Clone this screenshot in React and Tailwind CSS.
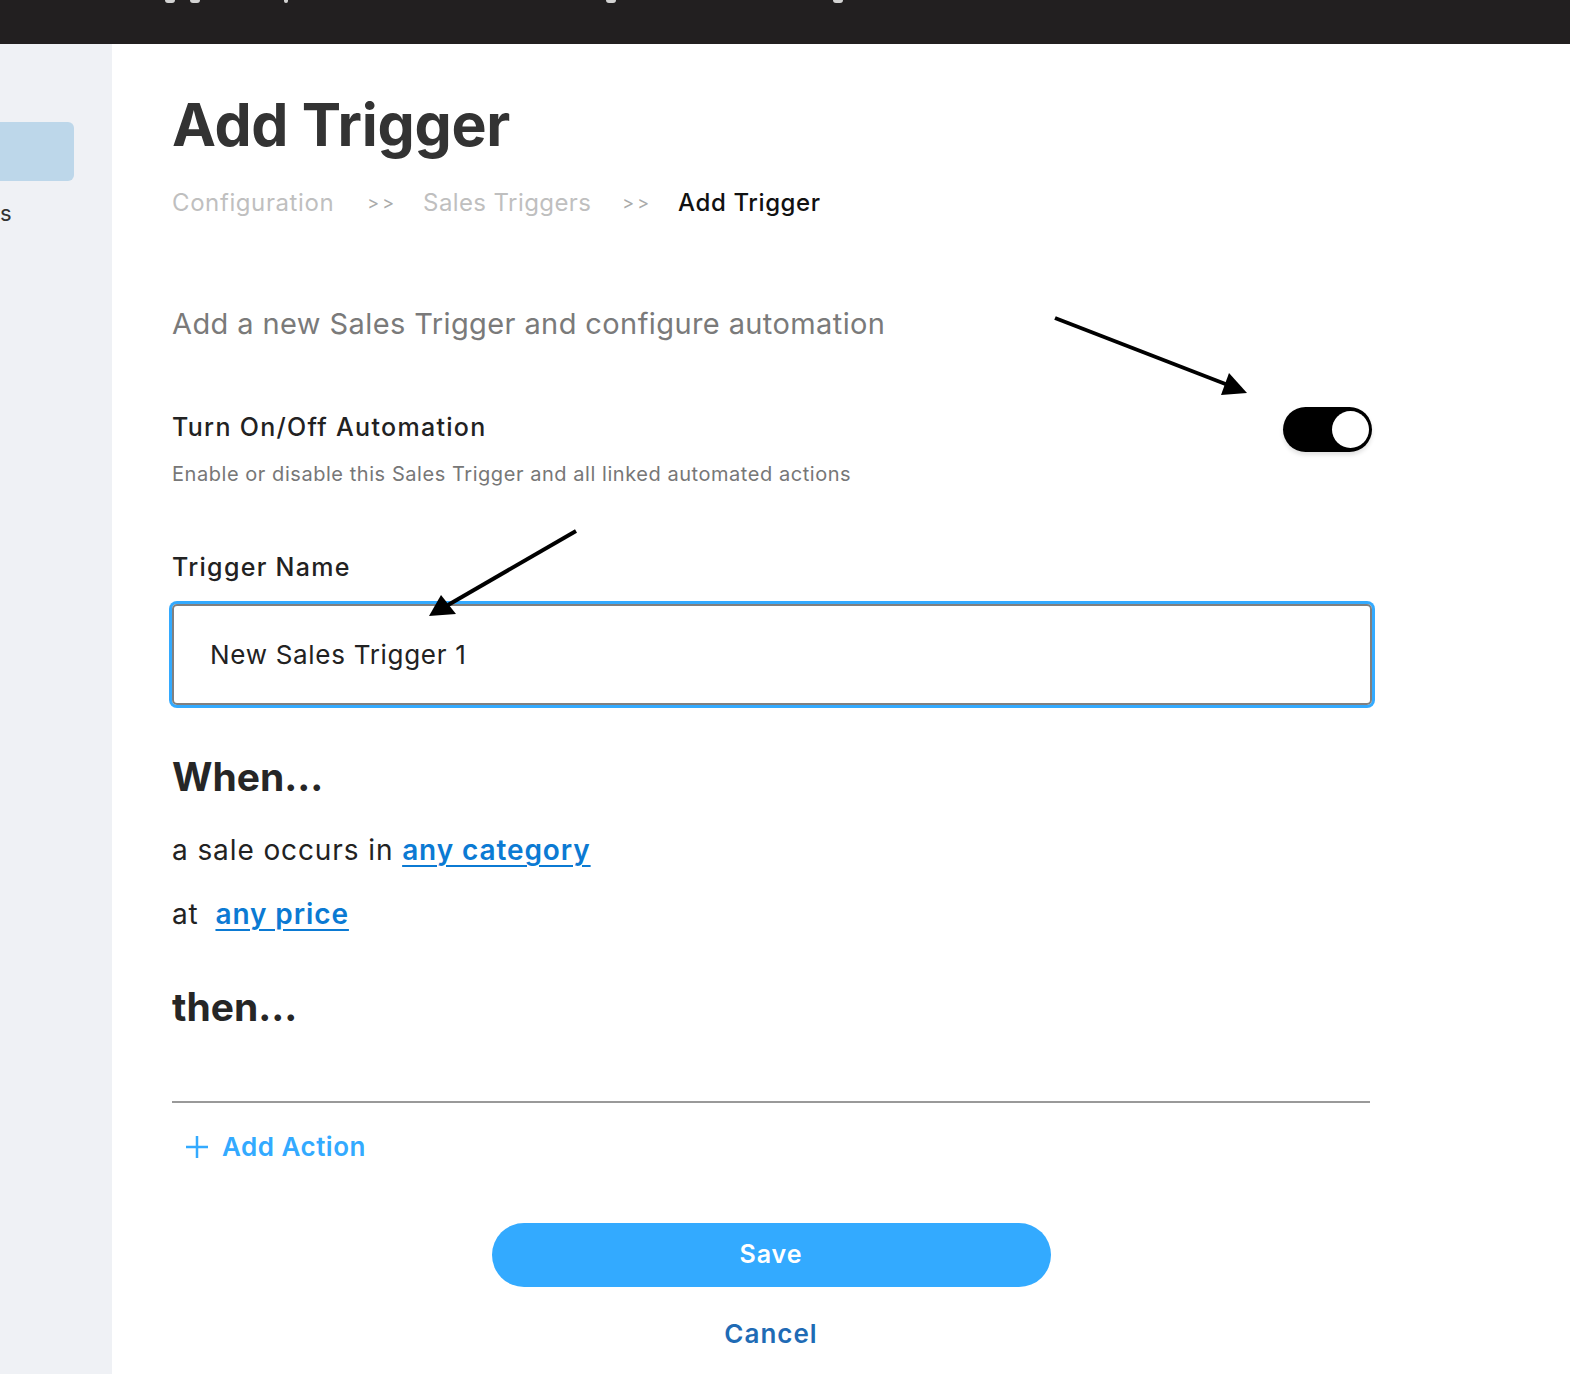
import React from "react";

function Toggle() {
  return (
    <div className="relative h-[45px] w-[89px] shrink-0 rounded-full bg-black shadow-[0_3px_4px_rgba(0,0,0,0.12)]">
      <div className="absolute right-[3px] top-[4px] h-[37px] w-[37px] rounded-full bg-white" />
    </div>
  );
}

export default function App() {
  return (
    <div
      className="relative min-h-[1374px] w-full bg-white"
      style={{ fontFamily: "Inter, 'Noto Sans', sans-serif" }}
    >
      {/* top bar */}
      <div className="relative h-[44px] w-full bg-[#221f20]">
        <div className="absolute left-[165px] top-0 h-[3px] w-[10px] rounded-b-full bg-white/80" />
        <div className="absolute left-[190px] top-0 h-[3px] w-[10px] rounded-b-full bg-white/80" />
        <div className="absolute left-[284px] top-0 h-[3px] w-[4px] rounded-b-full bg-white/80" />
        <div className="absolute left-[606px] top-0 h-[3px] w-[10px] rounded-b-full bg-white/80" />
        <div className="absolute left-[833px] top-0 h-[3px] w-[10px] rounded-b-full bg-white/80" />
      </div>

      <div className="flex">
        {/* sidebar */}
        <div className="min-h-[1330px] w-[112px] shrink-0 bg-[#eff1f5] pt-[78px]">
          <div className="h-[59px] w-[74px] rounded-r-[6px] bg-[#bdd7ea]" />
          <div className="mt-[17px] text-[22px] leading-[30px] text-[#333]">s</div>
        </div>

        {/* main */}
        <div className="flex w-[1198px] flex-col pl-[60px] pt-[49px] box-content">
          <h1 className="text-[59px] font-bold leading-[64px] tracking-[-0.3px] text-[#333]">
            Add Trigger
          </h1>

          <div className="mt-[30px] flex items-center text-[24px] leading-[32px] tracking-[0.6px]">
            <span className="text-[#bfbfbf]">Configuration</span>
            <span className="ml-[33px] text-[18px] tracking-[3px] text-[#aaa]">&gt;&gt;</span>
            <span className="ml-[26px] tracking-[0.4px] text-[#bfbfbf]">Sales Triggers</span>
            <span className="ml-[31px] text-[18px] tracking-[3px] text-[#aaa]">&gt;&gt;</span>
            <span className="ml-[26px] font-medium text-[#111]">Add Trigger</span>
          </div>

          <p className="mt-[87px] text-[29px] leading-[36px] tracking-[0.4px] text-[#7a7a7a]">
            Add a new Sales Trigger and configure automation
          </p>

          <div className="mt-[65px] flex items-start justify-between">
            <div>
              <div className="mt-[4px] text-[25px] font-medium leading-[32px] tracking-[1.3px] text-[#222]">
                Turn On/Off Automation
              </div>
              <div className="mt-[17px] text-[20px] leading-[28px] tracking-[0.55px] text-[#777]">
                Enable or disable this Sales Trigger and all linked automated actions
              </div>
            </div>
            <div className="mr-[-2px]">
              <Toggle />
            </div>
          </div>

          <label className="mt-[63px] text-[25px] font-medium leading-[32px] tracking-[1.3px] text-[#222]">
            Trigger Name
          </label>
          <div className="mt-[21px] mr-[-2px] flex h-[101px] items-center rounded-[5px] border-2 border-[#808080] pl-[36px] ring-[3px] ring-[#33aaff]">
            <span className="text-[26px] leading-[36px] tracking-[0.7px] text-[#222]">New Sales Trigger 1</span>
          </div>

          <h2 className="mt-[48px] text-[39px] font-bold leading-[48px] text-[#262626]">When...</h2>

          <p className="mt-[29px] text-[28px] leading-[40px] tracking-[0.9px] text-[#222]">
            a sale occurs in{" "}
            <a className="font-semibold text-[#0b7ad3] underline underline-offset-[5px] decoration-2">
              any category
            </a>
          </p>
          <p className="mt-[24px] text-[28px] leading-[40px] tracking-[0.9px] text-[#222]">
            at{" "}
            <a className="ml-[8px] font-semibold text-[#0b7ad3] underline underline-offset-[5px] decoration-2">
              any price
            </a>
          </p>

          <h2 className="mt-[49px] text-[39px] font-bold leading-[48px] text-[#262626]">then...</h2>

          <div className="mt-[70px] h-[2px] w-full bg-[#999]" />

          <div className="mt-[26px] flex items-center gap-[12px] pl-[12px] text-[26px] font-semibold leading-[36px] tracking-[0.5px] text-[#33aaff]">
            <svg width="26" height="26" viewBox="0 0 26 26" fill="none" stroke="#33aaff" strokeWidth="2.5">
              <path d="M13 2v22M2 13h22" />
            </svg>
            <span>Add Action</span>
          </div>

          <div className="mt-[58px] flex justify-center">
            <button className="h-[64px] w-[559px] rounded-full bg-[#33aaff] text-[25px] font-semibold tracking-[1px] text-white">
              Save
            </button>
          </div>

          <div className="mt-[29px] text-center text-[26px] font-semibold leading-[36px] tracking-[1px] text-[#1f6bb5]">
            Cancel
          </div>
        </div>
      </div>

      {/* annotation arrows */}
      <svg
        className="pointer-events-none absolute left-0 top-0"
        width="1570"
        height="1374"
        viewBox="0 0 1570 1374"
      >
        <line x1="1055" y1="318" x2="1228" y2="385" stroke="#000" strokeWidth="4" />
        <polygon points="1247,393 1221,395 1229,373" fill="#000" />
        <line x1="576" y1="531" x2="448" y2="605" stroke="#000" strokeWidth="4" />
        <polygon points="429,616 441,595 456,614" fill="#000" />
      </svg>
    </div>
  );
}
